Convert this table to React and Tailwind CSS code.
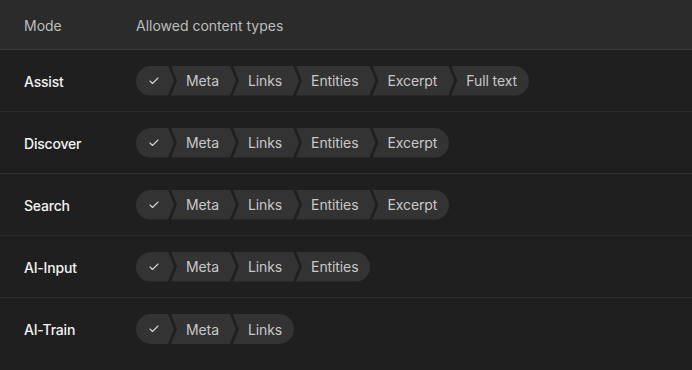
import { Check } from "lucide-react"

const modes = [
  { name: "Assist", types: ["Meta", "Links", "Entities", "Excerpt", "Full text"] },
  { name: "Discover", types: ["Meta", "Links", "Entities", "Excerpt"] },
  { name: "Search", types: ["Meta", "Links", "Entities", "Excerpt"] },
  { name: "AI-Input", types: ["Meta", "Links", "Entities"] },
  { name: "AI-Train", types: ["Meta", "Links"] },
]

const Chain = ({ types }) => (
  <div className="flex items-center h-[30px]">
    <div className="flex items-center h-full w-[38px] pl-[12px] bg-[#333333] rounded-l-full [clip-path:polygon(0_0,calc(100%-6px)_0,100%_50%,calc(100%-6px)_100%,0_100%)]">
      <Check size={12} strokeWidth={2.2} className="text-[#d4d4d4]" />
    </div>
    {types.map((type, i) => {
      const last = i === types.length - 1
      return (
        <div
          key={type}
          className={
            last
              ? "flex items-center h-full -ml-[3px] pl-[15px] pr-[12px] bg-[#333333] rounded-r-full [clip-path:polygon(0_0,100%_0,100%_100%,0_100%,6px_50%)]"
              : "flex items-center h-full -ml-[3px] pl-[15px] pr-[17px] bg-[#333333] [clip-path:polygon(0_0,calc(100%-6px)_0,100%_50%,calc(100%-6px)_100%,0_100%,6px_50%)]"
          }
        >
          <span className="pt-px text-[14px] text-[#c8c8c8] leading-none tracking-[-0.1px]">{type}</span>
        </div>
      )
    })}
  </div>
)

const App = () => {
  return (
    <div className="bg-[#1f1f1f] min-h-screen font-['Inter',sans-serif]">
      <div className="flex items-center h-[50px] bg-[#2b2b2b] border-b border-[#383838] text-[14px] text-[#bdbdbd]">
        <div className="w-[136px] pl-6 pt-px">Mode</div>
        <div className="pt-px">Allowed content types</div>
      </div>

      {modes.map((mode) => (
        <div key={mode.name} className="flex items-center h-[62px] border-b border-[#2e2e2e] last:border-b-0">
          <div className="w-[136px] pl-6 pt-px text-[14px] font-medium text-[#f2f2f2] tracking-[-0.2px]">{mode.name}</div>
          <Chain types={mode.types} />
        </div>
      ))}
    </div>
  )
}

export default App
